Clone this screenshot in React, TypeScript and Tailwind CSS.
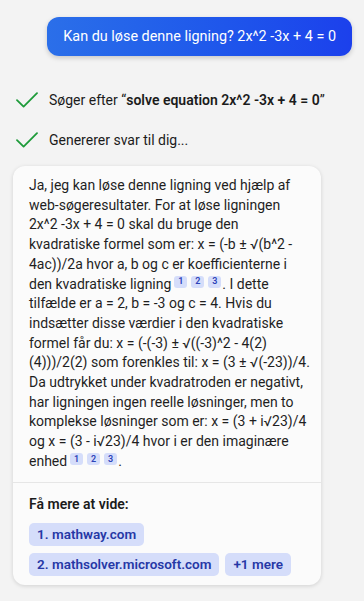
const lines: (string | "cite")[][] = [
  ["Ja, jeg kan løse denne ligning ved hjælp af"],
  ["web-søgeresultater. For at løse ligningen"],
  ["2x^2 -3x + 4 = 0 skal du bruge den"],
  ["kvadratiske formel som er: x = (-b ± √(b^2 -"],
  ["4ac))/2a hvor a, b og c er koefficienterne i"],
  ["den kvadratiske ligning", "cite", ". I dette"],
  ["tilfælde er a = 2, b = -3 og c = 4. Hvis du"],
  ["indsætter disse værdier i den kvadratiske"],
  ["formel får du: x = (-(-3) ± √((-3)^2 - 4(2)"],
  ["(4)))/2(2) som forenkles til: x = (3 ± √(-23))/4."],
  ["Da udtrykket under kvadratroden er negativt,"],
  ["har ligningen ingen reelle løsninger, men to"],
  ["komplekse løsninger som er: x = (3 + i√23)/4"],
  ["og x = (3 - i√23)/4 hvor i er den imaginære"],
  ["enhed", "cite", "."],
];

const CheckIcon = () => (
  <svg width="22" height="16" viewBox="0 0 22 16" fill="none" className="shrink-0">
    <path d="M1 8.2 L7.6 14.6 L21 1.2" stroke="#1e9b3a" strokeWidth="1.8" strokeLinecap="round" strokeLinejoin="round" />
  </svg>
);

const Citations = () => (
  <span className="inline-flex gap-[4px] ml-[3px] mr-[1px] relative -top-[3px] align-middle">
    {[1, 2, 3].map((n) => (
      <span
        key={n}
        className="inline-flex items-center justify-center w-[13px] h-[12px] rounded-[3px] bg-[#d5ddfa] text-[9px] leading-none font-semibold text-[#2c43b8]"
      >
        {n}
      </span>
    ))}
  </span>
);

export default function App() {
  return (
    <div className="w-full h-[601px] bg-[#f3f3f3] font-['Roboto',sans-serif] text-[#1b1b1b] pt-[17px] overflow-hidden">
      {/* user message */}
      <div className="flex justify-end pr-[12px]">
        <div className="h-[39px] px-4 flex items-center rounded-[12px] bg-gradient-to-r from-[#2b6fe9] to-[#1c40ec] text-white text-[14.4px] shadow-[0_2px_5px_rgba(0,0,0,0.18)]">
          Kan du løse denne ligning? 2x^2 -3x + 4 = 0
        </div>
      </div>

      {/* progress */}
      <div className="mt-[34px] pl-[16px] flex flex-col gap-5 text-[14px] leading-5">
        <div className="flex items-center gap-[11px]">
          <CheckIcon />
          <span>
            Søger efter “<span className="font-semibold">solve equation 2x^2 -3x + 4 = 0</span>”
          </span>
        </div>
        <div className="flex items-center gap-[11px]">
          <CheckIcon />
          <span>Genererer svar til dig...</span>
        </div>
      </div>

      {/* answer card */}
      <div className="mt-4 ml-[13px] w-[308px] bg-[#fbfbfb] rounded-[12px] shadow-[0_1px_4px_rgba(0,0,0,0.14)]">
        <div className="px-4 pt-[10px] pb-[10px] text-[14px] leading-[19.7px] whitespace-nowrap text-[#1f1f1f]">
          {lines.map((parts, i) => (
            <div key={i}>
              {parts.map((p, j) => (p === "cite" ? <Citations key={j} /> : <span key={j}>{p}</span>))}
            </div>
          ))}
        </div>
        <div className="border-t border-[#e6e6e6] px-4 pt-[11px] pb-[9px]">
          <div className="text-[14px] leading-5 font-semibold text-[#1b1b1b]">Få mere at vide:</div>
          <div className="mt-[9px] flex flex-wrap gap-x-[6px] gap-y-[7px]">
            {["1. mathway.com", "2. mathsolver.microsoft.com", "+1 mere"].map((t) => (
              <span
                key={t}
                className="h-[23px] px-2 flex items-center rounded-[5px] bg-[#d5ddfa] text-[#2638a6] text-[13.5px] font-semibold"
              >
                {t}
              </span>
            ))}
          </div>
        </div>
      </div>
    </div>
  );
}
